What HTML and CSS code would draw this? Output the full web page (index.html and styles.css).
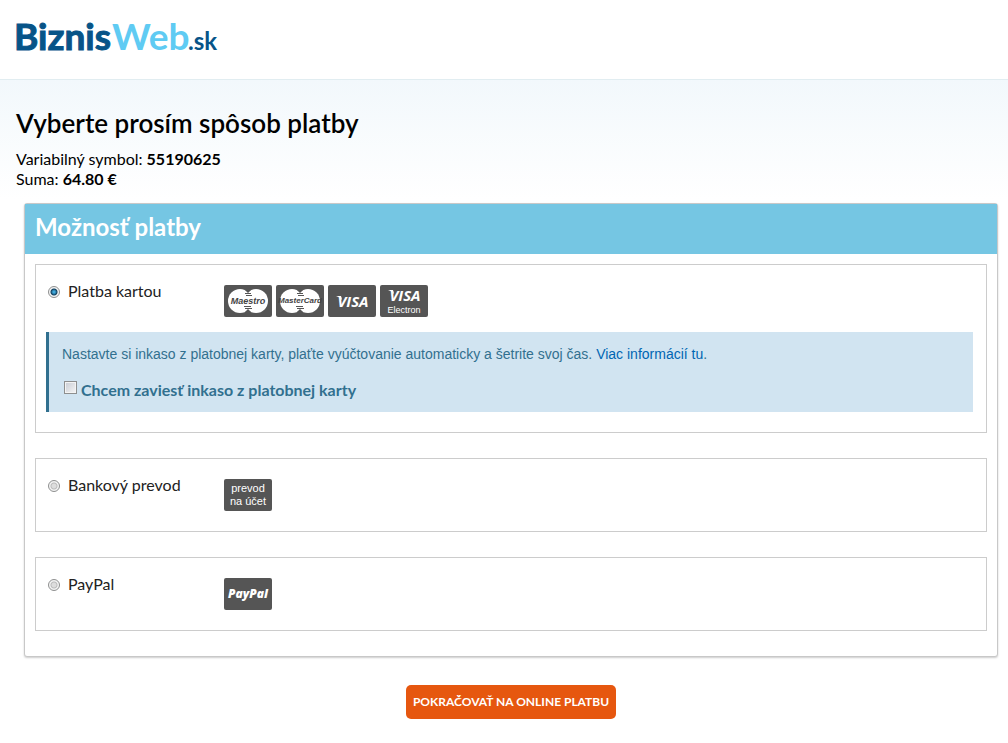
FILE: index.html
```html
<!DOCTYPE html>
<html lang="sk">
<head>
  <meta charset="UTF-8" />
  <meta name="viewport" content="width=device-width, initial-scale=1.0" />
  <title>BiznisWeb.sk - Spôsob platby</title>
  <link rel="stylesheet" href="styles.css">
</head>
<body>

  <header>
    <a href="#" class="logo" aria-label="BiznisWeb.sk">
      <svg width="204" height="40" viewBox="0 0 204 40">
        <text class="logo-dark" x="-2" y="34">Biznis</text>
        <text class="logo-light" x="96" y="34">Web</text>
        <text class="logo-small" x="172" y="34">.sk</text>
      </svg>
    </a>
  </header>

  <main>
    <h1>Vyberte prosím spôsob platby</h1>
    <p class="order">
      Variabilný symbol: <strong>55190625</strong><br>
      Suma: <strong>64.80 €</strong>
    </p>

    <form class="payment">
      <div class="panel">
        <h2>Možnosť platby</h2>
        <div class="methods">

          <div class="method">
            <div class="method-row">
              <input type="radio" name="method" id="card" checked />
              <label for="card">Platba kartou</label>
              <div class="cards">
                <svg class="card" viewBox="0 0 48 32">
                  <rect width="48" height="32" rx="2" />
                  <circle cx="16" cy="16" r="12" />
                  <circle cx="32" cy="16" r="12" />
                  <path d="M21 8.5h6M22 10.5h6M20 21.5h7M21 23.5h7" />
                  <path class="notch" d="M21 5l3 3 3-3zM21 27l3-3 3 3z" />
                  <text class="brand-maestro" x="24" y="19">Maestro</text>
                </svg>
                <svg class="card" viewBox="0 0 48 32">
                  <rect width="48" height="32" rx="2" />
                  <circle cx="16" cy="16" r="12" />
                  <circle cx="32" cy="16" r="12" />
                  <path d="M21 8.5h6M22 10.5h6M20 21.5h7M21 23.5h7" />
                  <path class="notch" d="M21 5l3 3 3-3zM21 27l3-3 3 3z" />
                  <text class="brand-master" x="24" y="18">MasterCard</text>
                </svg>
                <svg class="card" viewBox="0 0 48 32">
                  <rect width="48" height="32" rx="2" />
                  <text class="brand-visa" x="25" y="22">VISA</text>
                  <path class="serif" d="M8 11h5l1 4q-2-3-6-4z" />
                </svg>
                <svg class="card" viewBox="0 0 48 32">
                  <rect width="48" height="32" rx="2" />
                  <text class="brand-visa" x="25" y="16">VISA</text>
                  <path class="serif" d="M8 5h5l1 4q-2-3-6-4z" />
                  <text class="brand-sub" x="24" y="28">Electron</text>
                </svg>
              </div>
            </div>
            <div class="notice">
              <p>Nastavte si inkaso z platobnej karty, plaťte vyúčtovanie automaticky a šetrite svoj čas. <a href="#">Viac informácií tu</a>.</p>
              <div class="notice-check">
                <input type="checkbox" id="inkaso" />
                <label for="inkaso">Chcem zaviesť inkaso z platobnej karty</label>
              </div>
            </div>
          </div>

          <div class="method">
            <div class="method-row">
              <input type="radio" name="method" id="bank" />
              <label for="bank">Bankový prevod</label>
              <div class="cards">
                <svg class="card" viewBox="0 0 48 32">
                  <rect width="48" height="32" rx="2" />
                  <text class="brand-bank" x="24" y="13">prevod</text>
                  <text class="brand-bank" x="24" y="26">na účet</text>
                </svg>
              </div>
            </div>
          </div>

          <div class="method">
            <div class="method-row">
              <input type="radio" name="method" id="paypal" />
              <label for="paypal">PayPal</label>
              <div class="cards">
                <svg class="card" viewBox="0 0 48 32">
                  <rect width="48" height="32" rx="2" />
                  <text class="brand-paypal" x="24" y="20">PayPal</text>
                </svg>
              </div>
            </div>
          </div>

        </div>
      </div>
      <button type="submit">POKRAČOVAŤ NA ONLINE PLATBU</button>
    </form>
  </main>

</body>
</html>
```
FILE: styles.css
```css
* {
  box-sizing: border-box;
}

body {
  margin: 0;
  font-family: Lato, 'Open Sans', sans-serif;
  font-size: 16px;
  line-height: 20px;
  color: #000;
  background-color: white;
}

header {
  padding: 16px 16px 23px;
  border-bottom: 1px solid #e1edf1;
}

.logo,
.logo svg {
  display: block;
}

.logo {
  width: 204px;
}

.logo svg {
  overflow: visible;
}

.logo text {
  font-family: Lato, sans-serif;
  font-size: 38px;
  font-weight: bold;
}

.logo .logo-dark {
  font-size: 37px;
  fill: #075488;
  stroke: #075488;
  stroke-width: 1;
}

.logo .logo-light {
  font-size: 37px;
  fill: #5fcbf3;
}

.logo .logo-small {
  font-size: 24px;
  fill: #075488;
}

main {
  padding: 27px 10px 24px 16px;
  background: linear-gradient(#f2f8fc, white 120px);
}

h1 {
  margin: 0 0 10px;
  font-size: 26px;
  line-height: 32px;
  font-weight: 600;
}

.order {
  margin: 0 0 14px;
}

.payment {
  margin-left: 8px;
  text-align: center;
}

.panel {
  margin-bottom: 28px;
  border: 1px solid #c8c8c8;
  border-radius: 3px;
  background: white;
  box-shadow: 0 1px 2px rgba(0,0,0,0.2);
  text-align: left;
}

h2 {
  margin: 0;
  padding: 8px 10px 12px;
  font-size: 24px;
  line-height: 30px;
  font-weight: bold;
  color: white;
  background-color: #75c6e3;
}

.methods {
  display: flex;
  flex-direction: column;
  gap: 25px;
  padding: 10px 10px 25px;
}

.method {
  padding: 20px 13px 20px 10px;
  border: 1px solid #ccc;
}

.method-row {
  display: flex;
  align-items: flex-start;
  color: #222;
}

.method-row label {
  width: 156px;
  margin-top: -4px;
}

input[type="radio"] {
  appearance: none;
  flex: none;
  width: 12px;
  height: 12px;
  margin: 1px 8px 0 2px;
  border: 1px solid #8e8f8f;
  border-radius: 50%;
  background: radial-gradient(#ddd 2px, #bbb 3px, #f4f4f4 4px);
}

input[type="radio"]:checked {
  background: radial-gradient(circle at 50% 50%, #3fa9dc 1px, #12405f 3px, #f4f4f4 4px);
}

.cards {
  display: flex;
  gap: 4px;
}

.card {
  width: 48px;
  height: 32px;
}

.card rect {
  fill: #555;
}

.card circle {
  fill: white;
}

.card path {
  fill: none;
  stroke: #555;
  stroke-width: 1;
}

.card .notch {
  fill: #555;
  stroke: none;
}

.card .serif {
  fill: white;
  stroke: none;
}

.card text {
  font-family: 'Liberation Sans', Arial, sans-serif;
  text-anchor: middle;
  fill: white;
}

.card .brand-maestro,
.card .brand-master {
  font-size: 9px;
  font-weight: bold;
  font-style: italic;
  fill: #444;
}

.card .brand-master {
  font-size: 8px;
}

.card .brand-visa {
  font-family: 'Open Sans', sans-serif;
  font-size: 15px;
  font-weight: bold;
  font-style: italic;
}

.card .brand-sub {
  font-size: 9px;
}

.card .brand-bank {
  font-size: 11px;
}

.card .brand-paypal {
  font-family: 'Open Sans', sans-serif;
  font-size: 12px;
  font-weight: 800;
  font-style: italic;
}

.notice {
  margin-top: 15px;
  padding: 12px 13px;
  border-left: 3px solid #31708f;
  background-color: #d1e4f1;
  color: #31708f;
}

.notice p {
  margin: 0 0 16px;
  font-family: 'Liberation Sans', Arial, sans-serif;
  font-size: 14px;
}

.notice a {
  color: #0066b3;
  text-decoration: none;
}

.notice-check {
  display: flex;
  height: 20px;
  font-weight: bold;
}

input[type="checkbox"] {
  appearance: none;
  flex: none;
  width: 13px;
  height: 13px;
  margin: 1px 4px 0 2px;
  border: 1px solid #8e8f8f;
  background: linear-gradient(135deg, #c8ccd4, #f6f6f6);
  box-shadow: inset 0 0 0 1px #f4f4f4;
}

input[type="checkbox"]:checked {
  background: #31708f;
}

button {
  padding: 7px;
  border: none;
  border-radius: 5px;
  font-family: inherit;
  font-size: 12px;
  line-height: 20px;
  font-weight: bold;
  color: white;
  background-color: #e6570f;
  cursor: pointer;
}
```
